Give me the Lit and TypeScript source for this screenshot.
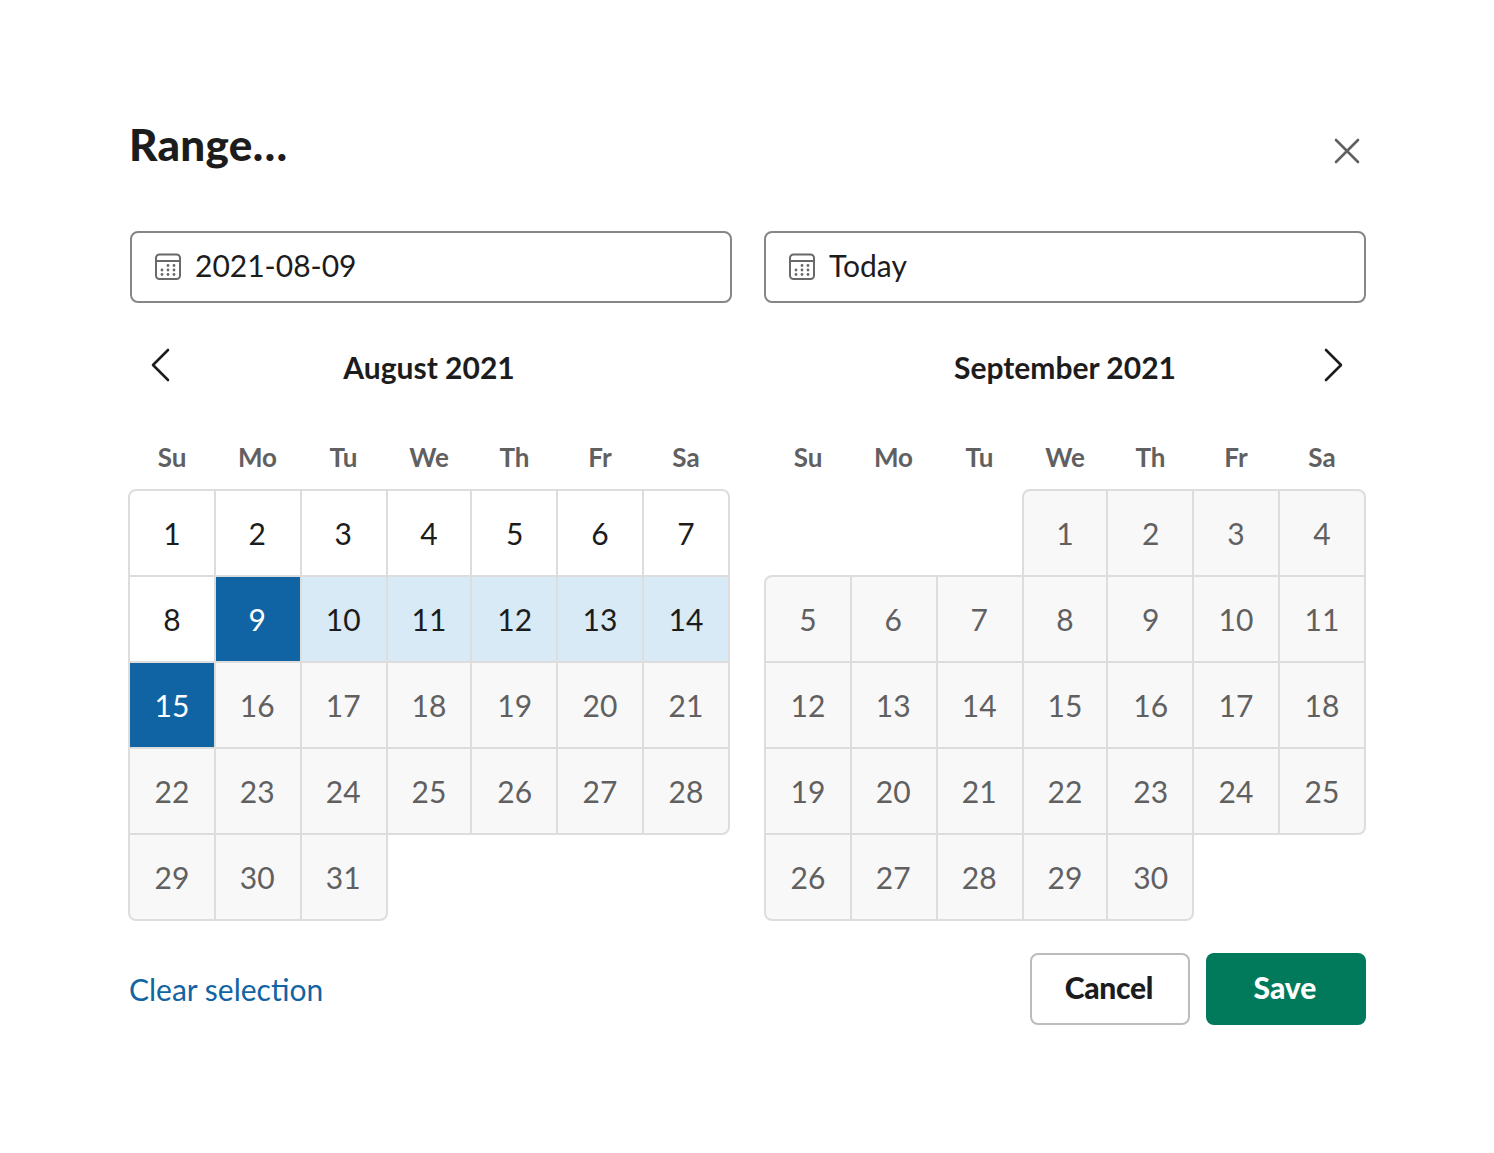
import { LitElement, html, css, svg } from "lit";
import { customElement } from "lit/decorators.js";

const WEEK = ["Su", "Mo", "Tu", "We", "Th", "Fr", "Sa"];

interface Month {
  title: string;
  offset: number;
  days: number;
  cls: string;
}

const AUG: Month = { title: "August 2021", offset: 0, days: 31, cls: "aug" };
const SEP: Month = { title: "September 2021", offset: 3, days: 30, cls: "sep" };

function cellClass(m: Month, d: number): string {
  if (m === SEP) return "off";
  if (d <= 8) return "";
  if (d === 9 || d === 15) return "sel";
  if (d <= 14) return "range";
  return "off";
}

function cornerClass(m: Month, d: number): string {
  const idx = m.offset + d - 1;
  const col = idx % 7;
  const lastRow = Math.floor((m.offset + m.days - 1) / 7);
  const row = Math.floor(idx / 7);
  const c: string[] = [];
  if (d === 1) c.push("tl");
  if (row === 0 && col === 6) c.push("tr");
  if (row === lastRow - 1 && col === 6) c.push("br");
  if (row === lastRow && col === 0) c.push("bl");
  if (d === m.days) c.push("br");
  if (m === SEP && d === 5) c.push("tl");
  return c.join(" ");
}

const calIcon = svg`<svg class="cal" width="28" height="28" viewBox="0 0 28 28" fill="none">
  <rect x="2" y="1.5" width="24" height="24.5" rx="3.5" stroke="#696969" stroke-width="2"/>
  <path d="M2 8h24" stroke="#696969" stroke-width="2"/>
  <g fill="#696969">
    <circle cx="14" cy="12.5" r="1.4"/><circle cx="20" cy="12.5" r="1.4"/>
    <circle cx="8" cy="17" r="1.4"/><circle cx="14" cy="17" r="1.4"/><circle cx="20" cy="17" r="1.4"/>
    <circle cx="8" cy="21.5" r="1.4"/><circle cx="14" cy="21.5" r="1.4"/><circle cx="20" cy="21.5" r="1.4"/>
  </g>
</svg>`;

@customElement("app-root")
export class AppRoot extends LitElement {
  static styles = css`
    :host {
      display: block;
      font-family: Lato, "Open Sans", sans-serif;
      color: #1d1c1d;
      background: #fff;
      min-height: 1153px;
    }
    .modal {
      box-sizing: border-box;
      width: 1494px;
      height: 1153px;
      padding: 118px 128px 0 130px;
    }
    .head {
      display: flex;
      justify-content: space-between;
      align-items: flex-start;
      height: 113px;
    }
    h1 {
      margin: -2px 0 0 -1px;
      font-size: 44px;
      line-height: 56px;
      font-weight: 900;
      letter-spacing: 0.3px;
    }
    .close {
      margin-top: 19px;
      margin-right: 5px;
      display: block;
    }
    .columns {
      display: grid;
      grid-template-columns: 602px 602px;
      column-gap: 32px;
    }
    .input {
      box-sizing: border-box;
      height: 72px;
      border: 2px solid #868686;
      border-radius: 8px;
      display: flex;
      align-items: center;
      padding-left: 22px;
      gap: 13px;
      font-size: 30px;
      color: #1d1c1d;
    }
    .input span {
      margin-bottom: 4px;
    }
    .cal {
      flex: none;
    }
    .title-row {
      position: relative;
      height: 46px;
      margin-top: 41px;
      display: flex;
      align-items: center;
      justify-content: center;
      font-size: 30px;
      font-weight: 700;
    }
    .aug .title-row span {
      position: relative;
      left: -2px;
    }
    .nav {
      position: absolute;
      top: 3px;
    }
    .nav.prev {
      left: 18px;
    }
    .nav.next {
      right: 20px;
    }
    .week {
      display: grid;
      grid-template-columns: 86px 86px 86px 84px 86px 86px 86px;
      margin-top: 51px;
      height: 48px;
      align-items: start;
      font-size: 26px;
      font-weight: 700;
      color: #616061;
      text-align: center;
      line-height: 32px;
    }
    .week div:nth-child(2),
    .week div:nth-child(3) {
      padding-right: 1px;
    }
    .week div:nth-child(5) {
      padding-left: 1px;
    }
    .aug .week {
      margin-left: -1px;
    }
    .sep .week {
      margin-left: 1px;
    }
    .grid {
      display: grid;
      grid-template-columns: 86px 86px 86px 84px 86px 86px 86px;
      grid-auto-rows: 86px;
    }
    .aug .grid {
      margin-left: -2px;
    }
    .cell {
      box-sizing: border-box;
      height: 88px;
      margin-right: -2px;
      border: 2px solid #dddddd;
      display: flex;
      align-items: center;
      justify-content: center;
      font-size: 30px;
      color: #1d1c1d;
      background: #fff;
    }
    .cell:nth-child(7n + 2),
    .cell:nth-child(7n + 3) {
      padding-right: 1.5px;
    }
    .cell:nth-child(7n + 5) {
      padding-left: 1.5px;
    }
    .off {
      background: #f8f8f8;
      color: #616061;
    }
    .range {
      background: #d7eaf5;
      color: #1d1c1d;
    }
    .sel {
      background: #1164a3;
      color: #fff;
      position: relative;
      z-index: 1;
    }
    .tl { border-top-left-radius: 8px; }
    .tr { border-top-right-radius: 8px; }
    .bl { border-bottom-left-radius: 8px; }
    .br { border-bottom-right-radius: 8px; }
    .foot {
      display: flex;
      justify-content: space-between;
      align-items: center;
      margin-top: 34px;
      height: 72px;
    }
    .clear {
      font-size: 30px;
      color: #1264a3;
      margin-left: -1px;
    }
    .btns {
      display: flex;
      gap: 16px;
    }
    .btn {
      box-sizing: border-box;
      width: 160px;
      height: 72px;
      border-radius: 8px;
      display: flex;
      align-items: center;
      justify-content: center;
      padding-bottom: 4px;
      font-size: 30px;
      font-weight: 900;
    }
    .cancel {
      border: 2px solid #bcbcbc;
      color: #1d1c1d;
      background: #fff;
      letter-spacing: -0.3px;
      padding-right: 2px;
    }
    .save {
      background: #007a5a;
      color: #fff;
      padding-right: 2px;
    }
  `;

  private month(m: Month, nav: "prev" | "next") {
    const cells = [];
    for (let i = 0; i < m.offset; i++) cells.push(html`<div></div>`);
    for (let d = 1; d <= m.days; d++) {
      cells.push(
        html`<div class="cell ${cellClass(m, d)} ${cornerClass(m, d)}">${d}</div>`
      );
    }
    return html`
      <div class="month ${m.cls}">
        <div class="title-row">
          ${nav === "prev"
            ? html`<svg class="nav prev" width="26" height="36" viewBox="0 0 26 36" fill="none"><path d="M20 3 5 18l15 15" stroke="#1d1c1d" stroke-width="2.6" stroke-linecap="round" stroke-linejoin="round"/></svg>`
            : html`<svg class="nav next" width="26" height="36" viewBox="0 0 26 36" fill="none"><path d="M6 3l15 15L6 33" stroke="#1d1c1d" stroke-width="2.6" stroke-linecap="round" stroke-linejoin="round"/></svg>`}
          <span>${m.title}</span>
        </div>
        <div class="week">${WEEK.map((w) => html`<div>${w}</div>`)}</div>
        <div class="grid">${cells}</div>
      </div>
    `;
  }

  render() {
    return html`
      <div class="modal">
        <div class="head">
          <h1>Range…</h1>
          <svg class="close" width="28" height="28" viewBox="0 0 28 28" fill="none"><path d="M3 3l22 22M25 3 3 25" stroke="#616061" stroke-width="2.6" stroke-linecap="round"/></svg>
        </div>
        <div class="columns">
          <div class="input">${calIcon}<span>2021-08-09</span></div>
          <div class="input">${calIcon}<span>Today</span></div>
          ${this.month(AUG, "prev")}
          ${this.month(SEP, "next")}
        </div>
        <div class="foot">
          <div class="clear">Clear selection</div>
          <div class="btns">
            <div class="btn cancel">Cancel</div>
            <div class="btn save">Save</div>
          </div>
        </div>
      </div>
    `;
  }
}
